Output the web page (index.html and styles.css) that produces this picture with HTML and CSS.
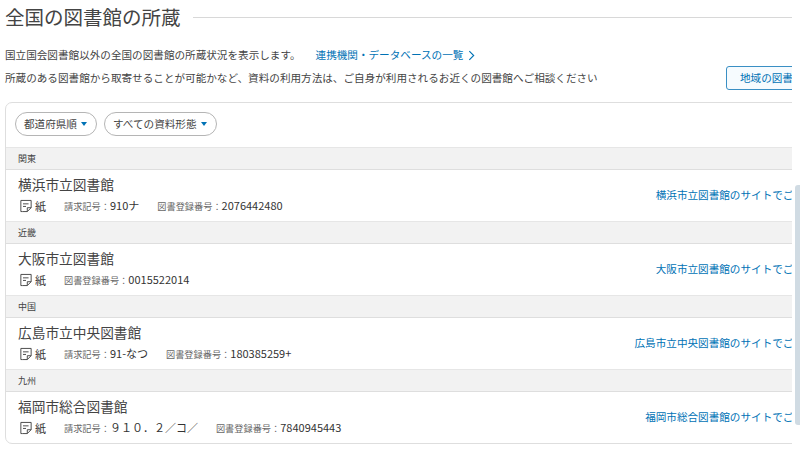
FILE: index.html
```html
<!DOCTYPE html>
<html lang="ja">
<head>
<meta charset="utf-8">
<title>全国の図書館の所蔵</title>
<link rel="stylesheet" href="styles.css">
</head>
<body>
<main class="clip">
  <div class="inner">
    <div class="title-row">
      <h2 class="title">全国の図書館の所蔵</h2>
      <span class="title-rule"></span>
    </div>
    <div class="intro">
      <div class="intro-text">
        <p class="line first">国立国会図書館以外の全国の図書館の所蔵状況を表示します。<a class="more">連携機関・データベースの一覧<svg class="chev" viewBox="0 0 8 12" width="7" height="11"><path d="M1.5 1 L6.5 6 L1.5 11" fill="none" stroke="#0072b5" stroke-width="1.3"/></svg></a></p>
        <p class="line">所蔵のある図書館から取寄せることが可能かなど、資料の利用方法は、ご自身が利用されるお近くの図書館へご相談ください</p>
      </div>
      <a class="region-btn">地域の図書館を探す</a>
    </div>
    <section class="card">
      <div class="filters">
        <button class="pill">都道府県順<span class="caret"></span></button>
        <button class="pill">すべての資料形態<span class="caret"></span></button>
      </div>
      <div class="group">関東</div>
      <div class="row">
        <div class="info">
          <div class="name">横浜市立図書館</div>
          <div class="meta">
            <span class="kind"><svg class="doc" viewBox="0 0 14 15" width="12" height="14"><path d="M1 1 H13 V9.5 L8.5 14 H3 L1 14 Z M13 9.5 H8.5 V14 M3.5 5 H10 M3.5 8 H7" fill="none" stroke="#444" stroke-width="1.1"/></svg>紙</span>
            <span class="field"><span class="label">請求記号：</span>910ナ</span>
            <span class="field"><span class="label">図書登録番号：</span>2076442480</span>
          </div>
        </div>
        <a class="site">横浜市立図書館のサイトでご確認ください</a>
      </div>
      <div class="group">近畿</div>
      <div class="row">
        <div class="info">
          <div class="name">大阪市立図書館</div>
          <div class="meta">
            <span class="kind"><svg class="doc" viewBox="0 0 14 15" width="12" height="14"><path d="M1 1 H13 V9.5 L8.5 14 H3 L1 14 Z M13 9.5 H8.5 V14 M3.5 5 H10 M3.5 8 H7" fill="none" stroke="#444" stroke-width="1.1"/></svg>紙</span>
            <span class="field"><span class="label">図書登録番号：</span>0015522014</span>
          </div>
        </div>
        <a class="site">大阪市立図書館のサイトでご確認ください</a>
      </div>
      <div class="group">中国</div>
      <div class="row">
        <div class="info">
          <div class="name">広島市立中央図書館</div>
          <div class="meta">
            <span class="kind"><svg class="doc" viewBox="0 0 14 15" width="12" height="14"><path d="M1 1 H13 V9.5 L8.5 14 H3 L1 14 Z M13 9.5 H8.5 V14 M3.5 5 H10 M3.5 8 H7" fill="none" stroke="#444" stroke-width="1.1"/></svg>紙</span>
            <span class="field"><span class="label">請求記号：</span>91-なつ</span>
            <span class="field"><span class="label">図書登録番号：</span>180385259+</span>
          </div>
        </div>
        <a class="site">広島市立中央図書館のサイトでご確認ください</a>
      </div>
      <div class="group">九州</div>
      <div class="row last">
        <div class="info">
          <div class="name">福岡市総合図書館</div>
          <div class="meta">
            <span class="kind"><svg class="doc" viewBox="0 0 14 15" width="12" height="14"><path d="M1 1 H13 V9.5 L8.5 14 H3 L1 14 Z M13 9.5 H8.5 V14 M3.5 5 H10 M3.5 8 H7" fill="none" stroke="#444" stroke-width="1.1"/></svg>紙</span>
            <span class="field"><span class="label">請求記号：</span>９１０．２／コ／</span>
            <span class="field"><span class="label">図書登録番号：</span>7840945443</span>
          </div>
        </div>
        <a class="site">福岡市総合図書館のサイトでご確認ください</a>
      </div>
    </section>
  </div>
</main>
<div class="scroll-thumb"></div>
</body>
</html>
```
FILE: styles.css
```css
* { box-sizing: border-box; }
html, body { margin: 0; height: 452px; overflow: hidden; background: #fff; }
body {
  font-family: "Noto Sans CJK JP", "Noto Sans", sans-serif;
  color: #444;
  position: relative;
}
.clip { width: 792px; height: 452px; overflow: hidden; }
.inner { width: 870px; padding: 2px 0 0 5px; }
.title-row { display: flex; align-items: center; gap: 12px; height: 30px; }
.title { margin: 0; font-size: 19.5px; font-weight: 400; line-height: 30px; color: #444; flex: none; }
.title-rule { flex: 1; height: 1px; background: #d8d8d8; }
.intro { display: flex; justify-content: space-between; align-items: flex-end; margin-top: 12px; height: 46px; }
.intro-text { padding-bottom: 1px; }
.line { margin: 0; font-size: 10.6px; line-height: 22px; white-space: nowrap; }
.line.first { margin-bottom: 1px; }
.more { color: #0072b5; margin-left: 15px; }
.chev { margin-left: 5px; vertical-align: -1.5px; }
.region-btn {
  width: 144px; height: 24px; padding-left: 13px;
  border: 1px solid #3a8fc4; border-radius: 3px; background: #f6fbfe;
  color: #0072b5; font-size: 10.6px; line-height: 22px; white-space: nowrap;
}
.card { margin-top: 12px; border: 1px solid #dedede; border-radius: 7px; }
.filters { display: flex; gap: 7px; padding: 9px; height: 44px; }
.pill {
  height: 24px; padding: 0 9px 0 8px; display: flex; align-items: center;
  border: 1px solid #b5b5b5; border-radius: 12px; background: #fff;
  font: 10.6px/22px "Noto Sans CJK JP", sans-serif; color: #444;
}
.caret {
  width: 0; height: 0; margin-left: 4px;
  border-left: 3px solid transparent; border-right: 3px solid transparent; border-top: 4px solid #0072b5;
}
.group {
  height: 23px; padding-left: 12px; background: #f2f2f2;
  border-top: 1px solid #e6e6e6; border-bottom: 1px solid #dedede;
  font-size: 9px; line-height: 21px; color: #444;
}
.row { display: flex; justify-content: space-between; align-items: center; height: 51px; padding: 0 12px 0 12px; }
.row.last { height: 51px; }
.name { font-size: 13.7px; line-height: 20px; margin-top: -3px; color: #444; }
.meta { display: flex; align-items: center; gap: 18px; font-size: 11px; line-height: 16px; margin-top: 3px; color: #333; }
.kind { display: flex; align-items: center; gap: 3px; font-size: 11px; margin-left: 2px; }
.doc { flex: none; }
.label { color: #666; font-size: 9.2px; }
.site { color: #0072b5; font-size: 10.6px; white-space: nowrap; margin-top: -2px; }
.scroll-thumb {
  position: absolute; left: 795px; top: 185px; width: 5px; height: 240px;
  border-radius: 3px 0 0 3px; background: #d0dbe3;
}
```
